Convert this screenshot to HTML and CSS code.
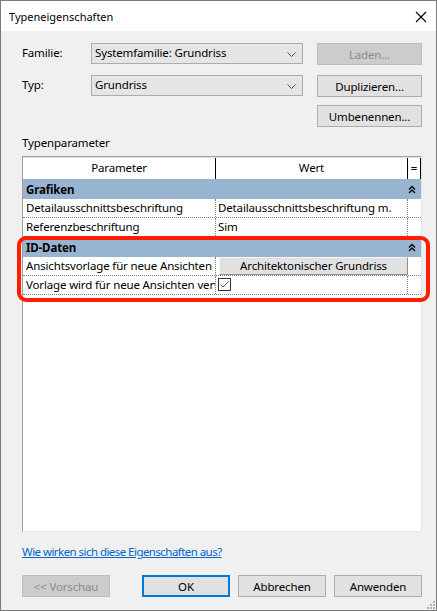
FILE: index.html
```html
<!DOCTYPE html>
<html lang="de">
    <head>
        <meta charset="UTF-8">
        <title>Typeneigenschaften</title>
        <link rel="stylesheet" href="styles.css">
    </head>
    <body>
        <div class="fenster">
            <!-- Titelleiste -->
            <div class="titelleiste">
                <span class="titel">Typeneigenschaften</span>
                <span class="schliessen">
                    <svg width="12" height="12" viewBox="0 0 12 12"><path d="M1 1 L11 11 M11 1 L1 11" stroke="#000" stroke-width="1.1" fill="none"/></svg>
                </span>
            </div>

            <div class="inhalt">
                <div class="formular">
                    <label>Familie:</label>
                    <div class="combo">Systemfamilie: Grundriss
                        <svg class="pfeil" width="9" height="5" viewBox="0 0 9 5"><path d="M0.5 0.5 L4.5 4.5 L8.5 0.5" stroke="#555" fill="none"/></svg>
                    </div>
                    <button class="knopf" disabled>Laden...</button>

                    <label class="zeile2">Typ:</label>
                    <div class="combo zeile2">Grundriss
                        <svg class="pfeil" width="9" height="5" viewBox="0 0 9 5"><path d="M0.5 0.5 L4.5 4.5 L8.5 0.5" stroke="#555" fill="none"/></svg>
                    </div>
                    <button class="knopf zeile2">Duplizieren...</button>

                    <button class="knopf zeile3">Umbenennen...</button>
                </div>

                <div class="abschnitt">Typenparameter</div>

                <!-- Eigenschaftentabelle -->
                <div class="tabelle">
                    <div class="kopf">
                        <div class="zelle">Parameter</div>
                        <div class="zelle">Wert</div>
                        <div class="zelle gleich">=</div>
                    </div>

                    <div class="gruppe">
                        <span>Grafiken</span>
                        <svg width="8" height="9" viewBox="0 0 8 9"><path d="M1 4.5 L4 1.5 L7 4.5 M1 8 L4 5 L7 8" stroke="#000" stroke-width="1.3" fill="none"/></svg>
                    </div>
                    <div class="reihe">
                        <div class="zelle">Detailausschnittsbeschriftung</div>
                        <div class="zelle">Detailausschnittsbeschriftung m.</div>
                        <div class="zelle"></div>
                    </div>
                    <div class="reihe">
                        <div class="zelle">Referenzbeschriftung</div>
                        <div class="zelle">Sim</div>
                        <div class="zelle"></div>
                    </div>

                    <div class="gruppe">
                        <span>ID-Daten</span>
                        <svg width="8" height="9" viewBox="0 0 8 9"><path d="M1 4.5 L4 1.5 L7 4.5 M1 8 L4 5 L7 8" stroke="#000" stroke-width="1.3" fill="none"/></svg>
                    </div>
                    <div class="reihe">
                        <div class="zelle">Ansichtsvorlage für neue Ansichten</div>
                        <div class="zelle wert-knopf"><span class="vorlage">Architektonischer Grundriss</span></div>
                        <div class="zelle"></div>
                    </div>
                    <div class="reihe">
                        <div class="zelle">Vorlage wird für neue Ansichten verwendet</div>
                        <div class="zelle">
                            <span class="haken">
                                <svg width="11" height="11" viewBox="0 0 11 11"><path d="M1.5 5.5 L4 8 L9.5 2.5" stroke="#555" stroke-width="1" fill="none"/></svg>
                            </span>
                        </div>
                        <div class="zelle"></div>
                    </div>

                    <!-- rote Markierung -->
                    <div class="markierung"></div>
                </div>

                <a class="hilfe" href="#">Wie wirken sich diese Eigenschaften aus?</a>

                <div class="fusszeile">
                    <button class="knopf" disabled>&lt;&lt; Vorschau</button>
                    <div class="rechts">
                        <button class="knopf standard">OK</button>
                        <button class="knopf">Abbrechen</button>
                        <button class="knopf">Anwenden</button>
                    </div>
                </div>
            </div>

            <svg class="griff" width="8" height="8" viewBox="0 0 8 8">
                <rect x="6" y="0" width="2" height="2" fill="#b4b4b4"/>
                <rect x="3" y="3" width="2" height="2" fill="#b4b4b4"/>
                <rect x="6" y="3" width="2" height="2" fill="#b4b4b4"/>
                <rect x="0" y="6" width="2" height="2" fill="#b4b4b4"/>
                <rect x="3" y="6" width="2" height="2" fill="#b4b4b4"/>
                <rect x="6" y="6" width="2" height="2" fill="#b4b4b4"/>
            </svg>
        </div>
    </body>
</html>
```

FILE: styles.css
```css
/* Dialog Typeneigenschaften */
body {
    margin: 0;
    font-family: "Noto Sans", "DejaVu Sans", sans-serif;
    font-size: 11.5px;
    letter-spacing: -0.15px;
    color: #000;
}
.fenster {
    position: relative;
    width: 437px;
    height: 611px;
    box-sizing: border-box;
    border: 1px solid #7a7a7a;
    background-color: #f0f0f0;
    display: flex;
    flex-direction: column;
}
.titelleiste {
    height: 30px;
    background-color: #fff;
    display: flex;
    align-items: center;
    justify-content: space-between;
    padding: 0 9px 0 8px;
}
.titel {
    font-size: 11px;
    letter-spacing: 0;
}
.schliessen {
    display: flex;
    margin-top: 1px;
}
.inhalt {
    padding: 12px 14px 0 21px;
    display: flex;
    flex-direction: column;
}

/* Formular oben */
.formular {
    display: grid;
    grid-template-columns: 69px 212px 14px 105px;
    grid-template-rows: 22px 22px 22px;
    row-gap: 10px;
}
.formular label {
    line-height: 20px;
}
.formular .knopf {
    grid-column: 4;
}
.zeile2 {
    grid-row: 2;
}
.zeile3 {
    grid-row: 3;
    margin-top: -2px;
}
.combo {
    position: relative;
    background-color: #e5e5e5;
    border: 1px solid #acacac;
    height: 21px;
    box-sizing: border-box;
    padding-left: 3px;
    line-height: 18px;
}
.pfeil {
    position: absolute;
    right: 6px;
    top: 8px;
}
.knopf {
    font-family: inherit;
    font-size: 11.5px;
    letter-spacing: -0.15px;
    color: #000;
    background-color: #e1e1e1;
    border: 1px solid #adadad;
    height: 22px;
    padding: 0;
}
.knopf:disabled {
    background-color: #cccccc;
    border-color: #bfbfbf;
    color: #8b8b8b;
}
.knopf.standard {
    border: 2px solid #0078d7;
}
.abschnitt {
    margin-top: 6px;
    line-height: 16px;
}

/* Tabelle */
.tabelle {
    position: relative;
    margin-top: 5px;
    width: 400px;
    height: 376px;
    box-sizing: border-box;
    background-color: #fff;
    border: 1px solid;
    border-color: #a0a0a0 #e3e3e3 #e3e3e3 #a0a0a0;
}
.kopf {
    display: grid;
    grid-template-columns: 193px 192px 13px;
    height: 22px;
    box-sizing: border-box;
    border-top: 1px solid #e3e3e3;
}
.kopf .zelle {
    text-align: center;
    line-height: 20px;
    border-right: 1px solid #000;
}
.gruppe {
    display: flex;
    justify-content: space-between;
    align-items: center;
    background-color: #99b4d1;
    height: 20px;
    padding: 0 5px 0 3px;
    font-weight: bold;
}
.reihe {
    display: grid;
    grid-template-columns: 193px 192px 13px;
    height: 19px;
    box-sizing: border-box;
    border-bottom: 1px dotted #808080;
}
.reihe .zelle {
    border-right: 1px dotted #808080;
    padding-left: 3px;
    line-height: 18px;
    white-space: nowrap;
    overflow: hidden;
}
.reihe .zelle:nth-child(2) {
    padding-left: 2px;
}
.reihe .zelle:last-child {
    border-right: none;
    padding: 0;
}
.reihe .wert-knopf {
    padding: 0;
    overflow: visible;
}
.vorlage {
    display: block;
    height: 18px;
    box-sizing: border-box;
    margin: 0 -1px 0 1px;
    background-color: #e1e1e1;
    border: 1px solid #a0a0a0;
    border-color: #f5f5f5 #8f8f8f #8f8f8f #f5f5f5;
    text-align: center;
    line-height: 16px;
}
.haken {
    display: inline-block;
    width: 13px;
    height: 13px;
    box-sizing: border-box;
    border: 1px solid #333;
    background-color: #fff;
    margin-top: 2px;
    vertical-align: top;
}
.haken svg {
    display: block;
}
.markierung {
    position: absolute;
    left: -6px;
    top: 79px;
    width: 413px;
    height: 66px;
    box-sizing: border-box;
    border: 4px solid #ff1e00;
    border-radius: 9px;
}

/* unten */
.hilfe {
    margin-top: 12px;
    line-height: 16px;
    color: #0066cc;
    letter-spacing: -0.55px;
    align-self: flex-start;
}
.fusszeile {
    margin-top: 15px;
    display: flex;
    justify-content: space-between;
}
.fusszeile .knopf {
    width: 88px;
}
.rechts {
    display: flex;
    gap: 8px;
}
.griff {
    position: absolute;
    right: 1px;
    bottom: 1px;
}
```
